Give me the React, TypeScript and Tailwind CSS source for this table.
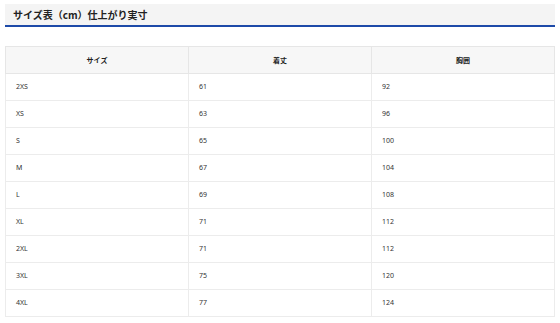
import React from "react";

const rows: [string, string, string][] = [
  ["2XS", "61", "92"],
  ["XS", "63", "96"],
  ["S", "65", "100"],
  ["M", "67", "104"],
  ["L", "69", "108"],
  ["XL", "71", "112"],
  ["2XL", "71", "112"],
  ["3XL", "75", "120"],
  ["4XL", "77", "124"],
];

export default function App() {
  return (
    <div
      className="w-[560px] h-[323px] bg-white overflow-hidden px-[5px] pt-[4px]"
      style={{ fontFamily: '"Noto Sans", "Noto Sans CJK JP", sans-serif' }}
    >
      <div className="h-[23px] bg-[#f4f4f4] border-b-2 border-[#1d4aa8] flex items-center pl-[8px] pt-[1px]">
        <span className="text-[10px] font-bold text-[#222] leading-none" style={{ fontFamily: '"Noto Sans CJK JP", sans-serif' }}>
          サイズ表（cm）仕上がり実寸
        </span>
      </div>
      <table className="mt-[19px] w-[550px] border-collapse table-fixed text-[7px] text-[#333]">
        <thead>
          <tr className="h-[27px] bg-[#f7f7f7]">
            <th className="border border-[#e6e6e6] font-bold text-center text-[#222]" style={{ fontFamily: '"Noto Sans CJK JP", sans-serif' }}>サイズ</th>
            <th className="border border-[#e6e6e6] font-bold text-center text-[#222]" style={{ fontFamily: '"Noto Sans CJK JP", sans-serif' }}>着丈</th>
            <th className="border border-[#e6e6e6] font-bold text-center text-[#222]" style={{ fontFamily: '"Noto Sans CJK JP", sans-serif' }}>胸囲</th>
          </tr>
        </thead>
        <tbody>
          {rows.map((r) => (
            <tr key={r[0]} className="h-[27px]">
              <td className="border border-[#ececec] pl-[10px]">{r[0]}</td>
              <td className="border border-[#ececec] pl-[10px]">{r[1]}</td>
              <td className="border border-[#ececec] pl-[10px]">{r[2]}</td>
            </tr>
          ))}
        </tbody>
      </table>
    </div>
  );
}
